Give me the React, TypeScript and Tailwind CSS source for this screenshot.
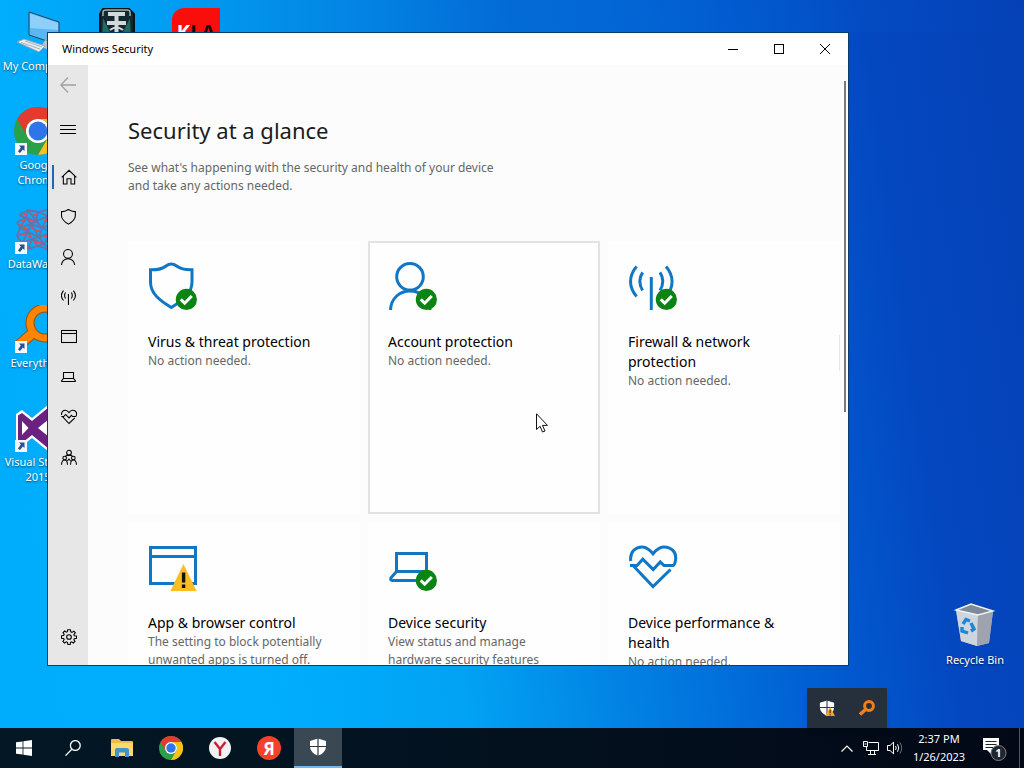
import type { ReactNode } from 'react';
import clsx from 'clsx';

type Status = 'ok' | 'warning' | 'none';

const glyphs: Record<string, ReactNode> = {
  home: (
    <path d="M2 25 L24 4 L46 25 M7 21 V45 H18 V29 H30 V45 H41 V21" />
  ),
  shield: (
    <path d="M1.5 7.8 C9 8 14 6.5 17 4 Q22.3 0 27.6 4 C31 6.5 36 8 43 7.8 V20 C43 32 33 39 22.3 45.5 C11.5 39 1.5 32 1.5 20 Z" />
  ),
  person: (
    <>
      <circle cx="21" cy="14.8" r="13.3" />
      <path d="M1.5 48 C2 36 11 29 21 29 C31 29 40.5 36 41 48" />
    </>
  ),
  antenna: (
    <>
      <path d="M22.3 15 V48" />
      <path d="M7.6 4.6 C-0.5 14 -0.5 25 7.6 34.5 M13.6 10.4 C10 16 10 22.5 13.6 28.5" />
      <path d="M37 4.6 C45.1 14 45.1 25 37 34.5 M31 10.4 C34.6 16 34.6 22.5 31 28.5" />
    </>
  ),
  window: (
    <>
      <rect x="1.5" y="4.5" width="45" height="36" />
      <path d="M1.5 13.5 H46.5" />
    </>
  ),
  laptop: (
    <path d="M7.5 28.5 V10.5 H37.5 V28.5 Z L2 34.8 Q0.8 37.5 3.5 37.5 H41.5 Q44.2 37.5 43 34.8 L37.5 28.5" />
  ),
  heart: (
    <>
      <path d="M1.7 18 C0.5 8.5 7 3.7 13.5 3.9 C18 4 21 7 24 10.8 C27 7 30 4 34.5 3.9 C42 3.7 48 9 46.5 17 Q45.8 22.5 43.5 22.6 H35 L31.3 19 L24.2 26.6 L13.8 16.2 L8 22.5 H1" />
      <path d="M4.5 23 L24 43.5 L41.5 26.5" />
    </>
  ),
  family: (
    <>
      <circle cx="24" cy="11" r="7" />
      <circle cx="11" cy="27" r="5.5" />
      <circle cx="37" cy="27" r="5.5" />
      <path d="M1.5 47 C2 38 6 33 11 33 C16 33 19 38 19.5 47 M28.5 47 C29 38 32 33 37 33 C42 33 46 38 46.5 47" />
      <path d="M14 21 C16 19 20 18.5 24 18.5 C28 18.5 32 19 34 21" />
      <path d="M19 36 L24 30 L29 36" />
    </>
  ),
  gear: (
    <>
      <circle cx="24" cy="24" r="7" />
      <path d="M20 2 H28 L29.5 8.5 L33 10 L38.5 6.3 L43 11.5 L38.5 17 L40 20 L46.5 21 V28 L40 29 L38.5 32 L42 37.5 L37 42 L31.5 38.5 L28.5 40 L27.5 46.5 H20.5 L19.5 40 L16 38.5 L10.5 42 L5.8 37 L9.5 31.5 L8 28.5 L1.5 27.5 V20.5 L8 19.5 L9.5 16 L6 10.5 L11 6 L16 9.5 L19 8.2 Z" />
    </>
  ),
};

function Glyph({ name, className }: { name: string; className: string }) {
  return (
    <svg viewBox="0 0 48 48" className={className} fill="none" stroke="currentColor" strokeWidth="3.2" aria-hidden="true">
      {glyphs[name]}
    </svg>
  );
}

function TileIcon({ name, status }: { name: string; status: Status }) {
  return (
    <svg viewBox="-1 -1 50 50" className="h-[50px] w-[50px] text-[#1177c4]" fill="none" stroke="currentColor" strokeWidth="3" aria-hidden="true">
      {glyphs[name]}
      {status === 'ok' && (
        <>
          <circle cx="37.4" cy="37.4" r="10.6" fill="#0b8414" stroke="none" />
          <path d="M31.7 37.4 L35.7 41.2 L42.8 34" stroke="#fff" />
        </>
      )}
      {status === 'warning' && (
        <>
          <path d="M34.4 21 L47.6 48 H21.4 Z" fill="#fbbd20" stroke="none" />
          <path d="M34.6 29.5 V39.5 M34.6 41.5 V45" stroke="#111" strokeWidth="3.4" />
        </>
      )}
    </svg>
  );
}

const tiles: { icon: string; status: Status; title: string; text: string; active?: boolean }[] = [
  { icon: 'shield', status: 'ok', title: 'Virus & threat protection', text: 'No action needed.' },
  { icon: 'person', status: 'ok', title: 'Account protection', text: 'No action needed.', active: true },
  { icon: 'antenna', status: 'ok', title: 'Firewall & network\nprotection', text: 'No action needed.' },
  { icon: 'window', status: 'warning', title: 'App & browser control', text: 'The setting to block potentially\nunwanted apps is turned off.' },
  { icon: 'laptop', status: 'ok', title: 'Device security', text: 'View status and manage\nhardware security features' },
  { icon: 'heart', status: 'none', title: 'Device performance &\nhealth', text: 'No action needed.' },
];

const navItems = [
  { icon: 'home', label: 'Home' },
  { icon: 'shield', label: 'Virus & threat protection' },
  { icon: 'person', label: 'Account protection' },
  { icon: 'antenna', label: 'Firewall & network protection' },
  { icon: 'window', label: 'App & browser control' },
  { icon: 'laptop', label: 'Device security' },
  { icon: 'heart', label: 'Device performance & health' },
  { icon: 'family', label: 'Family options' },
];

function ChromeLogo({ className }: { className: string }) {
  return (
    <svg viewBox="0 0 48 48" className={className} aria-hidden="true">
      <circle cx="24" cy="24" r="24" fill="#2c9f4b" />
      <path d="M3.2 12 A24 24 0 0 1 44.8 12 H24 A12 12 0 0 0 13.6 30 Z" fill="#e33b2e" />
      <path d="M44.8 12 A24 24 0 0 1 24 48 L34.4 30 A12 12 0 0 0 24 12 Z" fill="#fbc116" />
      <circle cx="24" cy="24" r="12" fill="#fff" />
      <circle cx="24" cy="24" r="9.4" fill="#2f74e8" />
    </svg>
  );
}

function ComputerIcon() {
  return (
    <svg viewBox="0 0 48 48" className="h-12 w-12" aria-hidden="true">
      <path d="M15 4 L45 14 V37 L15 27 Z" fill="#5cb6f2" stroke="#24455f" strokeWidth="1" />
      <path d="M16 5.5 L44 15 V22 L16 20 Z" fill="#8fd0fa" />
      <path d="M31 32 L40 35 L36 42 L27 39 Z" fill="#b9c3cb" />
      <path d="M3 34 L10 31 L31 38 L25 44 Z" fill="#e9eef2" stroke="#98a5b0" strokeWidth="1" />
      <path d="M7 34.5 L26 41 M11 33 L28 39" stroke="#a5b1bb" strokeWidth="1" />
    </svg>
  );
}

function DataIcon() {
  return (
    <svg viewBox="0 0 48 48" className="h-12 w-12" fill="none" stroke="#6f6fa6" strokeWidth="1.8" aria-hidden="true">
      <path d="M5 9 L14 4 L24 6 L36 3 M3 16 L12 12 L22 15 L34 10 M6 22 L17 18 L28 22 L40 17 M3 30 L14 26 L25 31 L38 26 M8 37 L18 33 L30 38 M14 43 L24 40 L36 44" />
      <path d="M5 9 L12 12 L6 22 L14 26 L8 37 L18 43 M14 4 L22 15 L17 18 L25 31 L18 33 L24 40 M24 6 L34 10 L28 22 L38 26 L30 38 L36 44" />
      <path d="M14 4 L12 12 L17 18 L14 26 L18 33 L14 43 M24 6 L22 15 L28 22 L25 31 L30 38 L24 40 M3 16 L6 22 L3 30 L8 37" />
      <path d="M8 14 h4 M19 9 h4 M10 23 h4 M22 25 h4 M14 31 h4 M24 36 h4 M30 15 h4 M5 19 h3 M17 22 h3 M29 30 h4 M10 8 h3 M16 14 h3 M20 36 h3 M8 28 h3" stroke="#d4505f" strokeWidth="2" />
    </svg>
  );
}

function EverythingIcon() {
  return (
    <svg viewBox="0 0 48 48" className="h-12 w-12" fill="none" aria-hidden="true">
      <circle cx="31" cy="18" r="15" stroke="#9a5208" strokeWidth="9" />
      <path d="M20 27 L4 41" stroke="#9a5208" strokeWidth="11" />
      <circle cx="31" cy="18" r="15" stroke="#ff8400" strokeWidth="7" />
      <path d="M21 26 L5 40" stroke="#ff8400" strokeWidth="9" />
    </svg>
  );
}

function StudioIcon() {
  return (
    <svg viewBox="0 0 48 48" className="h-12 w-12" aria-hidden="true">
      <path d="M2 10 L8 6 L18 14 L35 0 L48 5 V43 L35 48 L18 34 L8 42 L2 38 Z" fill="#fff" />
      <path d="M4 11.5 L8 9 L18 17 L35 3 L46 7 V41 L35 45 L18 31 L8 39 L4 36.5 Z" fill="#6a217f" />
      <path d="M8 17 L14.5 24 L8 31 Z M24 24 L35 15 V33 Z" fill="#fff" />
    </svg>
  );
}

function WarshipsIcon() {
  return (
    <svg viewBox="0 0 48 48" className="h-12 w-12" aria-hidden="true">
      <path d="M10 1 H36 L41 6 V40 L24 47 L7 40 V6 Z" fill="#11282e" stroke="#0a1417" strokeWidth="2" />
      <path d="M10 10 L17 24 V40 L9 32 Z M37 10 L30 24 V40 L38 32 Z" fill="#1d6a66" />
      <path d="M10 8 V4 Q10 2 13 2 H34 Q37 2 37 4 V8" fill="none" stroke="#9fb0b2" strokeWidth="1.5" />
      <path d="M15 6 H32 M23.5 5 V42 M14 15 H33" stroke="#d3d9da" strokeWidth="4" />
      <path d="M17 22 Q23.5 17 30 22" fill="none" stroke="#d3d9da" strokeWidth="2" />
    </svg>
  );
}

function BinIcon() {
  return (
    <svg viewBox="0 0 48 48" className="h-12 w-12" aria-hidden="true">
      <path d="M5 8 L20 2 L42 9 L38 41 L26 44 L10 39 Z" fill="#b6bcc6" />
      <path d="M5 8 L27 13 L26 44 L10 39 Z" fill="#cfd5dc" />
      <path d="M27 13 L42 9 L38 41 L26 44 Z" fill="#9ea3ad" />
      <path d="M5 8 L20 2 L42 9 L27 13 Z" fill="#7f8a99" stroke="#eef3f8" strokeWidth="1.4" />
      <path d="M12 22 L15 17.5 L19 19 M20 21 L23 27 L20 29 M17 31 L11 29 L11 25" fill="none" stroke="#1c86d8" strokeWidth="3.4" />
    </svg>
  );
}

function ShortcutArrow() {
  return (
    <svg viewBox="0 0 12 12" className="absolute bottom-0 left-px h-3 w-3" aria-hidden="true">
      <rect width="12" height="12" fill="#f4f7fb" />
      <path d="M4 2.5 H9.5 V8 L7.8 6.4 L5 10 L3 8.4 L5.8 4.6 Z" fill="#2a4f92" />
    </svg>
  );
}

function DesktopItem({ label, shortcut, children }: { label: string; shortcut?: boolean; children: ReactNode }) {
  return (
    <a href="#" className="flex h-[99px] w-[76px] flex-col items-center gap-[2px]">
      <span className="relative block h-12 w-12">
        {children}
        {shortcut && <ShortcutArrow />}
      </span>
      <span className="text-center text-[11px] leading-[15px] whitespace-pre text-white [text-shadow:0_1px_2px_rgba(0,0,0,0.6)]">
        {label}
      </span>
    </a>
  );
}

function DefenderShield({ className, children }: { className: string; children?: ReactNode }) {
  return (
    <svg viewBox="0 0 18 18" className={className} aria-hidden="true">
      <path d="M9 0.5 L17 3 V8 C17 13 13.5 16 9 17.8 C4.5 16 1 13 1 8 V3 Z" fill="#fff" />
      <path d="M9 0 V18 M0 8.5 H18" stroke="#2b3640" strokeWidth="1.2" />
      {children}
    </svg>
  );
}

function SecurityWindow() {
  return (
    <section
      aria-label="Windows Security"
      className="absolute top-8 right-[175px] bottom-[62px] left-[47px] flex flex-col overflow-hidden border border-[#0b3c6b] bg-white"
    >
      <header className="flex h-8 shrink-0 items-center justify-between">
        <h1 className="pl-[14px] text-[11px] text-black">Windows Security</h1>
        <div className="flex h-full">
          <button aria-label="Minimize" className="flex w-[46px] items-center justify-center">
            <svg viewBox="0 0 10 10" className="h-[10px] w-[10px]" stroke="#000" fill="none"><path d="M0 5.5 H10" /></svg>
          </button>
          <button aria-label="Maximize" className="flex w-[46px] items-center justify-center">
            <svg viewBox="0 0 10 10" className="h-[10px] w-[10px]" stroke="#000" fill="none"><rect x="0.5" y="0.5" width="9" height="9" /></svg>
          </button>
          <button aria-label="Close" className="flex w-[46px] items-center justify-center">
            <svg viewBox="0 0 10 10" className="h-[10px] w-[10px]" stroke="#000" fill="none"><path d="M0 0 L10 10 M10 0 L0 10" /></svg>
          </button>
        </div>
      </header>

      <div className="flex min-h-0 flex-1">
        {/* Navigation rail */}
        <nav className="flex w-10 shrink-0 flex-col bg-[#e7e7e7] pb-2 text-black">
          <button aria-label="Back" className="flex h-10 items-center justify-center text-[#a0a0a0]">
            <svg viewBox="0 0 16 16" className="h-4 w-4" fill="none" stroke="currentColor" strokeWidth="1.3"><path d="M0.8 8 H16 M8 0.5 L0.8 8 L8 15.5" /></svg>
          </button>
          <button aria-label="Menu" className="mt-1 flex h-10 items-center justify-center">
            <svg viewBox="0 0 16 16" className="h-4 w-4" fill="none" stroke="currentColor"><path d="M0 4.5 H16 M0 8.5 H16 M0 12.5 H16" /></svg>
          </button>
          <ul className="mt-2">
            {navItems.map((item, i) => (
              <li key={item.icon}>
                <a href="#" aria-label={item.label} className="relative flex h-10 items-center justify-center pl-[2px]">
                  {i === 0 && <span className="absolute left-1 h-6 w-[2px] bg-[#1a68c2]" />}
                  <Glyph name={item.icon} className="h-4 w-4" />
                </a>
              </li>
            ))}
          </ul>
          <a href="#" aria-label="Settings" className="mt-auto flex h-10 items-center justify-center pl-[2px]">
            <Glyph name="gear" className="h-4 w-4" />
          </a>
        </nav>

        {/* Page */}
        <main className="relative min-w-0 flex-1 overflow-hidden bg-[#fcfcfc] pt-[47px] pr-2 pl-10">
          <h2 className="text-[22px] leading-9 text-[#1b1b1b]">Security at a glance</h2>
          <p className="mt-[11px] text-[12px] leading-[18px] text-[#666]">
            See what's happening with the security and health of your device
            <br />
            and take any actions needed.
          </p>
          <div className="mt-[46px] grid auto-rows-[273px] grid-cols-3 gap-2">
            {tiles.map((tile) => (
              <button
                key={tile.title}
                className={clsx(
                  'flex flex-col items-start border-2 bg-[#fefefe] p-[18px] text-left whitespace-pre-line',
                  tile.active ? 'border-[#e2e2e2]' : 'border-transparent',
                )}
              >
                <TileIcon name={tile.icon} status={tile.status} />
                <span className="mt-[21px] text-[14px] leading-5 text-black">{tile.title}</span>
                <span className="text-[12px] leading-[18px] text-[#666]">{tile.text}</span>
              </button>
            ))}
          </div>
          <div className="absolute top-4 right-[2px] h-[331px] w-[2px] bg-[#7a7a7a]" />
          <div className="absolute top-[270px] right-2 h-9 w-px bg-[#e6e6e6]" />
        </main>
      </div>
    </section>
  );
}

function Taskbar() {
  return (
    <footer className="flex h-10 shrink-0 items-stretch justify-between bg-linear-to-r from-[#031724] via-[#03111f] to-[#020816] text-white">
      <div className="flex gap-px">
        <button aria-label="Start" className="flex w-12 items-center justify-center">
          <svg viewBox="0 0 16 16" className="h-4 w-4" fill="#fff"><path d="M0 2.3 L6.6 1.4 V7.6 H0 Z M7.4 1.3 L16 0 V7.6 H7.4 Z M0 8.4 H6.6 V14.6 L0 13.7 Z M7.4 8.4 H16 V16 L7.4 14.7 Z" /></svg>
        </button>
        <button aria-label="Search" className="flex w-12 items-center justify-center">
          <svg viewBox="0 0 16 16" className="h-4 w-4" fill="none" stroke="#fff" strokeWidth="1.3"><circle cx="10.3" cy="5.5" r="4.9" /><path d="M6.8 9.2 L0.5 15.6" /></svg>
        </button>
        <button aria-label="File Explorer" className="flex w-12 items-center justify-center">
          <svg viewBox="0 0 22 18" className="h-[18px] w-[22px]">
            <path d="M0 1 Q0 0 1 0 H8 L10 2 H21 Q22 2 22 3 V17 H0 Z" fill="#f2bb45" />
            <path d="M0 4 H22 V17 H0 Z" fill="#fbd971" />
            <path d="M4 18 V11 Q4 9 6 9 H16 Q18 9 18 11 V18 H14 V13.5 H8 V18 Z" fill="#4394ca" />
          </svg>
        </button>
        <button aria-label="Google Chrome" className="flex w-12 items-center justify-center">
          <ChromeLogo className="h-6 w-6" />
        </button>
        <button aria-label="Yandex Browser" className="flex w-12 items-center justify-center">
          <svg viewBox="0 0 22 22" className="h-[22px] w-[22px]">
            <circle cx="11" cy="11" r="11" fill="#f1f1f3" />
            <path d="M5.5 5 L11 12 L16.5 5 M11 12 V19" fill="none" stroke="#cc1e35" strokeWidth="2.4" />
          </svg>
        </button>
        <button aria-label="Yandex" className="flex w-12 items-center justify-center">
          <span className="flex h-6 w-6 items-center justify-center rounded-full bg-[#f5402a] text-[17px] leading-none font-bold">Я</span>
        </button>
        <button aria-label="Windows Security" className="flex w-12 items-center justify-center border-b-2 border-[#76b5ea] bg-[#3a4853]">
          <DefenderShield className="h-[18px] w-[18px]" />
        </button>
      </div>

      <div className="flex items-stretch">
        <button aria-label="Show hidden icons" className="flex w-6 items-center justify-center">
          <svg viewBox="0 0 12 7" className="h-[7px] w-3" fill="none" stroke="#fff" strokeWidth="1.2"><path d="M0.5 6.5 L6 1 L11.5 6.5" /></svg>
        </button>
        <button aria-label="Network" className="flex w-6 items-center justify-center">
          <svg viewBox="0 0 16 14" className="h-[14px] w-4" fill="none" stroke="#fff"><path d="M5.5 1.5 H15.5 V9.5 H3.5 V6 M0.5 0.5 H4.5 V5.5 H0.5 Z M1.5 3 H3.5 M7.5 9.5 V13 M11.5 9.5 V13 M5 13.5 H13" /></svg>
        </button>
        <button aria-label="Volume" className="flex w-6 items-center justify-center">
          <svg viewBox="0 0 16 14" className="h-[14px] w-4" fill="none" stroke="#fff"><path d="M0.5 4.5 H3 L6.5 1.2 V12.8 L3 9.5 H0.5 Z M8.5 5 Q10 7 8.5 9 M10.5 3.2 Q13 7 10.5 10.8" /><path d="M12.8 1.5 Q16.5 7 12.8 12.5" stroke="#66707c" /></svg>
        </button>
        <button className="w-16 text-center text-[11px] leading-[18px]">
          <span className="block">2:37 PM</span>
          <span className="block">1/26/2023</span>
        </button>
        <button aria-label="Notifications" className="flex w-12 items-center justify-center">
          <svg viewBox="0 0 26 26" className="h-[26px] w-[26px]">
            <path d="M1 3 H17 V15 H9 V19 L5 15 H1 Z" fill="#fff" />
            <path d="M3.5 6.5 H14.5 M3.5 9.5 H14.5 M3.5 12.5 H11" stroke="#1b2430" />
            <circle cx="16.5" cy="18" r="7.5" fill="#20262e" stroke="#77808a" />
            <text x="16.5" y="22" textAnchor="middle" fontSize="11" fontWeight="bold" fill="#fff">1</text>
          </svg>
        </button>
        <button aria-label="Show desktop" className="w-[5px] border-l border-[#4b5564]" />
      </div>
    </footer>
  );
}

export default function App() {
  return (
    <div className="flex h-screen flex-col overflow-hidden bg-[linear-gradient(82deg,#00adfd_0%,#00aefd_24%,#02a2f4_42%,#0284e4_55%,#015cd2_74%,#0447bf_86%,#0540b6_100%)] font-['Noto_Sans','Open_Sans',sans-serif]">
      <div className="relative min-h-0 flex-1">
        <div className="absolute inset-x-0 top-0 h-8 bg-linear-to-r from-transparent via-[#0459cc] to-transparent opacity-60" />

        {/* Desktop icons */}
        <div className="absolute top-2 left-0 flex gap-[3px]">
          <div className="flex flex-col">
            <DesktopItem label="My Computer"><ComputerIcon /></DesktopItem>
            <DesktopItem label={'Google\nChrome'} shortcut><ChromeLogo className="h-12 w-12" /></DesktopItem>
            <DesktopItem label="DataWagon" shortcut><DataIcon /></DesktopItem>
            <DesktopItem label="Everything" shortcut><EverythingIcon /></DesktopItem>
            <DesktopItem label={'Visual Studio\n2015'} shortcut><StudioIcon /></DesktopItem>
          </div>
          <DesktopItem label=""><WarshipsIcon /></DesktopItem>
          <DesktopItem label="">
            <span className="flex h-12 w-12 justify-center rounded-tl-xl bg-[#fb0d0b] pt-3 text-[20px] leading-6 font-bold text-white">
              K<span className="text-[#1c0a0a]">LA</span>
            </span>
          </DesktopItem>
        </div>
        <div className="absolute right-[11px] bottom-[27px]">
          <DesktopItem label="Recycle Bin"><BinIcon /></DesktopItem>
        </div>

        <SecurityWindow />

        {/* Hidden tray icons */}
        <div className="absolute right-[137px] bottom-0 flex h-10 w-20 bg-[#262f3c] shadow-md">
          <button aria-label="Windows Security status" className="flex w-10 items-center justify-center">
            <DefenderShield className="h-4 w-4">
              <path d="M12.5 8 L18 18 H7 Z" fill="#f9a51f" />
              <path d="M12.5 11 V15 M12.5 16 V17.3" stroke="#222" strokeWidth="1.2" />
            </DefenderShield>
          </button>
          <button aria-label="Everything" className="flex w-10 items-center justify-center">
            <svg viewBox="0 0 16 16" className="h-4 w-4" fill="none" stroke="#f57f17"><circle cx="10" cy="6" r="4.4" strokeWidth="3" /><path d="M6.5 9.5 L1 14.5" strokeWidth="3.4" /></svg>
          </button>
        </div>

        {/* Mouse pointer */}
        <svg viewBox="0 0 12 20" className="absolute top-[413px] left-[536px] h-5 w-3" aria-hidden="true">
          <path d="M0.5 0.8 V16.5 L4 13.2 L6.5 19 L9 18 L6.5 12.4 H11.5 Z" fill="#fff" stroke="#111" />
        </svg>
      </div>
      <Taskbar />
    </div>
  );
}
